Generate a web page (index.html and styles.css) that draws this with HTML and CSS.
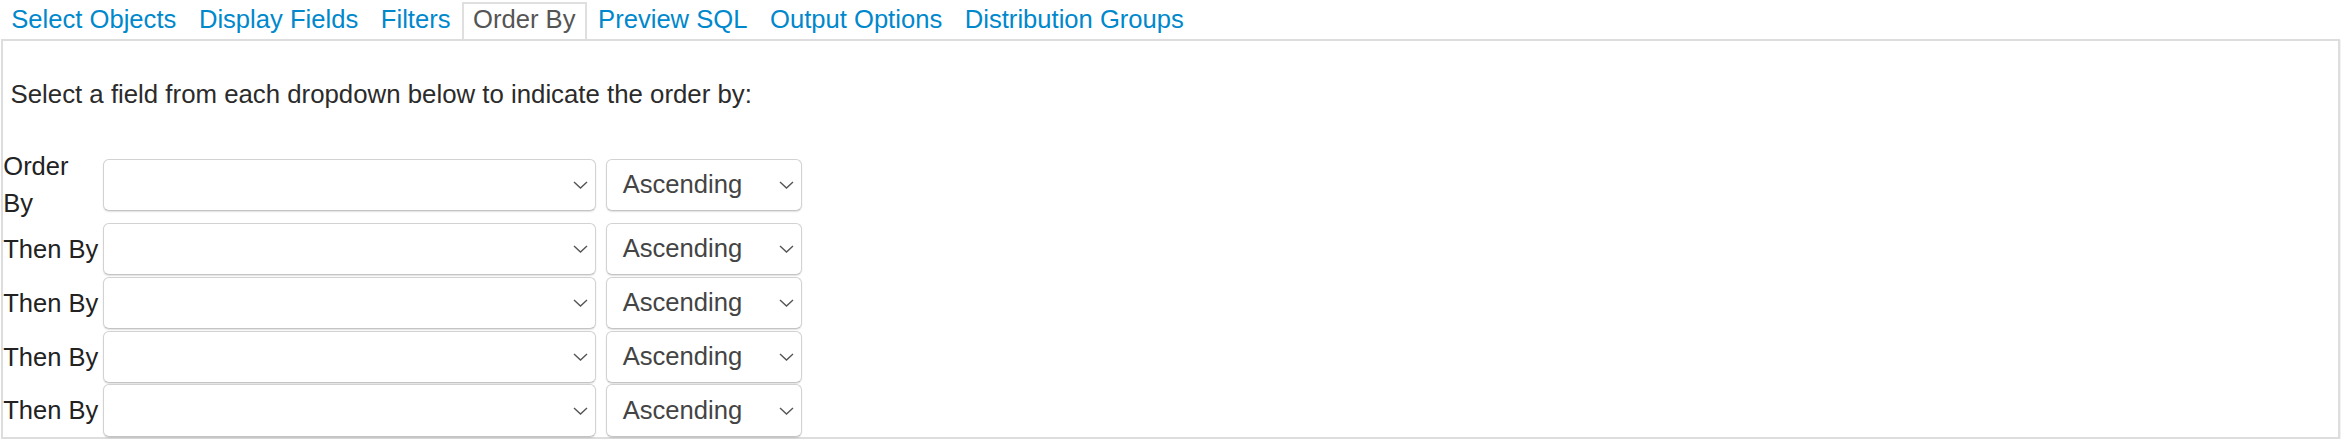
FILE: index.html
```html
<!DOCTYPE html>
<html>
<head>
<meta charset="utf-8">
<title>Order By</title>
<link rel="stylesheet" href="styles.css">
</head>
<body>
<nav class="tabs">
  <a class="tab" href="#">Select Objects</a>
  <a class="tab" href="#">Display Fields</a>
  <a class="tab" href="#">Filters</a>
  <span class="tab active">Order By</span>
  <a class="tab" href="#">Preview SQL</a>
  <a class="tab" href="#">Output Options</a>
  <a class="tab" href="#">Distribution Groups</a>
</nav>
<section class="panel">
  <p class="intro">Select a field from each dropdown below to indicate the order by:</p>
  <div class="order">
    <div class="lbl">Order By</div>
    <div class="sel sel-field"><span class="val"></span><svg class="chev" viewBox="0 0 15 8" width="15" height="8"><path d="M1 1 L7.5 7 L14 1"/></svg></div>
    <div class="sel sel-dir"><span class="val">Ascending</span><svg class="chev" viewBox="0 0 15 8" width="15" height="8"><path d="M1 1 L7.5 7 L14 1"/></svg></div>

    <div class="lbl">Then By</div>
    <div class="sel sel-field"><span class="val"></span><svg class="chev" viewBox="0 0 15 8" width="15" height="8"><path d="M1 1 L7.5 7 L14 1"/></svg></div>
    <div class="sel sel-dir"><span class="val">Ascending</span><svg class="chev" viewBox="0 0 15 8" width="15" height="8"><path d="M1 1 L7.5 7 L14 1"/></svg></div>

    <div class="lbl">Then By</div>
    <div class="sel sel-field"><span class="val"></span><svg class="chev" viewBox="0 0 15 8" width="15" height="8"><path d="M1 1 L7.5 7 L14 1"/></svg></div>
    <div class="sel sel-dir"><span class="val">Ascending</span><svg class="chev" viewBox="0 0 15 8" width="15" height="8"><path d="M1 1 L7.5 7 L14 1"/></svg></div>

    <div class="lbl">Then By</div>
    <div class="sel sel-field"><span class="val"></span><svg class="chev" viewBox="0 0 15 8" width="15" height="8"><path d="M1 1 L7.5 7 L14 1"/></svg></div>
    <div class="sel sel-dir"><span class="val">Ascending</span><svg class="chev" viewBox="0 0 15 8" width="15" height="8"><path d="M1 1 L7.5 7 L14 1"/></svg></div>

    <div class="lbl">Then By</div>
    <div class="sel sel-field"><span class="val"></span><svg class="chev" viewBox="0 0 15 8" width="15" height="8"><path d="M1 1 L7.5 7 L14 1"/></svg></div>
    <div class="sel sel-dir"><span class="val">Ascending</span><svg class="chev" viewBox="0 0 15 8" width="15" height="8"><path d="M1 1 L7.5 7 L14 1"/></svg></div>
  </div>
</section>
</body>
</html>
```
FILE: styles.css
```css
html, body {
  margin: 0;
  padding: 0;
  background: #fff;
}
body {
  font-family: "Liberation Sans", Arial, Helvetica, sans-serif;
  color: #333;
}
.tabs {
  display: flex;
  align-items: flex-end;
  padding-top: 1.5px;
  padding-left: 0;
}
.tab {
  display: block;
  font-size: 25.6px;
  line-height: 30px;
  padding: 0 9.3px 5px;
  border: 2px solid transparent;
  border-bottom: 0;
  color: #0088cc;
  text-decoration: none;
  white-space: nowrap;
}
.tab.active {
  color: #555;
  background: #fff;
  border-color: #dfdfdf;
}
.panel {
  margin: 0 1px 0 1px;
  border: 2px solid #dddddd;
  box-shadow: 1px 1px 1px rgba(0, 0, 0, 0.05);
  padding: 0 0 0.6px 0;
}
.intro {
  margin: 0;
  padding: 35.7px 8px 35.6px 7.5px;
  font-size: 25.8px;
  line-height: 36.5px;
  color: #2b2b2b;
}
.order {
  display: grid;
  grid-template-columns: 99.7px auto auto;
  justify-content: start;
  align-items: center;
  row-gap: 1.5px;
}
.lbl {
  font-size: 25.5px;
  line-height: 36.5px;
  color: #222;
  padding-left: 0.3px;
}
.sel {
  box-sizing: border-box;
  height: 52.4px;
  display: flex;
  align-items: center;
  justify-content: space-between;
  border: 1.5px solid #d2d2d2;
  border-bottom-color: #c4c4c4;
  border-radius: 6px;
  background: #fff;
  box-shadow: 0 1px 1.5px rgba(0, 0, 0, 0.12);
  padding: 0 7px 0 16px;
  font-size: 25.6px;
  color: #444;
}
.sel-field {
  width: 493.3px;
}
.sel-dir {
  width: 196px;
  margin-left: 9.7px;
}
.chev {
  flex: none;
  display: block;
}
.chev path {
  fill: none;
  stroke: #555;
  stroke-width: 1.4;
}
```
